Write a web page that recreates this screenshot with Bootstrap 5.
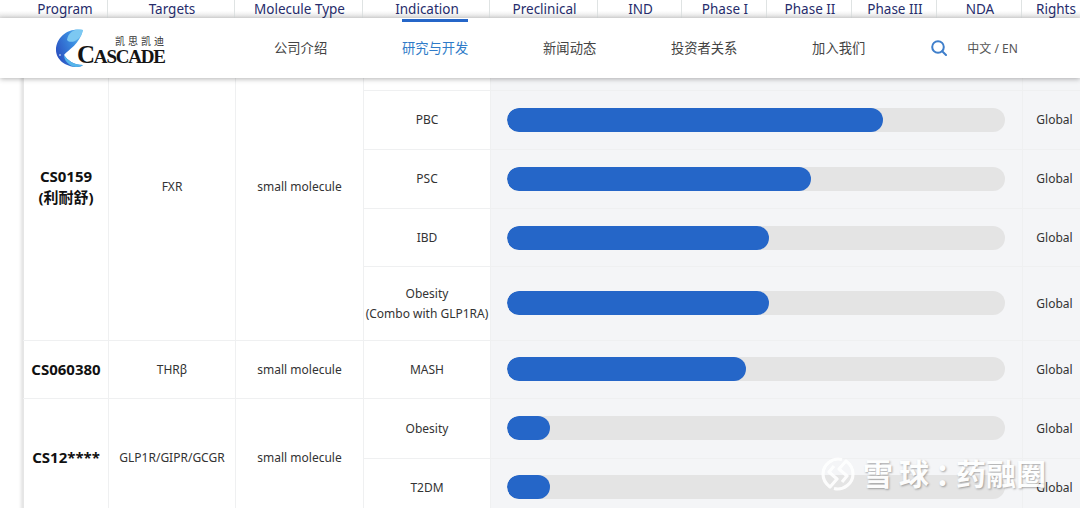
<!DOCTYPE html>
<html lang="en">
  <head>
    <meta charset="UTF-8" />
    <title>Cascade pipeline</title>
    <link href="https://cdn.jsdelivr.net/npm/bootstrap@5.3.0/dist/css/bootstrap.min.css" rel="stylesheet" />
    <style>
      body {
        width: 1080px;
        height: 508px;
        overflow: hidden;
        background: #fff;
        font-family: "Noto Sans", "Noto Sans CJK SC", sans-serif;
      }
      .strip {
        height: 18px;
        width: 1088px;
        display: grid;
        grid-template-columns: 108px 127px 128px 127px 108px 84px 85px 85px 85px 85px 66px;
        background: linear-gradient(#fff 60%, #e4e4e4);
        color: #262c6b;
        font-size: 13.5px;
        line-height: 18px;
        text-align: center;
      }
      .strip > div { border-right: 1px solid #dfe3e3; overflow: hidden; white-space: nowrap; padding-left: 2px; }
      .strip > div:last-child { border-right: 0; }
      .strip .first-col { padding-left: 23px; }
      .topnav {
        height: 60px;
        background: #fff;
        box-shadow: 0 1px 5px rgba(0, 0, 0, 0.3);
        position: relative;
        z-index: 2;
        padding-left: 56px;
        font-size: 13.3px;
        color: #444;
      }
      .brand { width: 110px; height: 40px; position: relative; flex: none; }
      .brand svg { position: absolute; left: 0; top: 0; }
      .brand-cn {
        position: absolute;
        left: 59px;
        top: 7px;
        font-size: 10px;
        letter-spacing: 3px;
        color: #333;
        line-height: 12px;
        white-space: nowrap;
      }
      .brand-en {
        position: absolute;
        left: 21px;
        top: 15px;
        font-family: "Liberation Serif", serif;
        font-weight: 700;
        font-size: 19px;
        line-height: 24px;
        color: #141414;
        letter-spacing: -1.2px;
        white-space: nowrap;
      }
      .brand-en b { font-size: 25px; }
      .menu { margin-left: 108px; gap: 74.7px; }
      .menu a { color: #444; text-decoration: none; position: relative; line-height: 20px; }
      .menu a.on { color: #2f7bc8; }
      .menu a.on::before {
        content: "";
        position: absolute;
        left: 0;
        right: 0;
        top: -19px;
        height: 2.5px;
        background: #2566c8;
      }
      .search { margin-left: 66px; flex: none; }
      .lang { margin-left: 20px; line-height: 19px; font-size: 12px; color: #555; }
      .pipe {
        margin: -46px 0 0 23px;
        border-left: 1px solid #e6e6e6;
        box-shadow: -3px 0 3px -1px rgba(0, 0, 0, 0.12);
        width: 1063px;
        table-layout: fixed;
        border-collapse: collapse;
        font-size: 12px;
        color: #333;
      }
      .pipe td {
        border: 1px solid #eff0f1;
        padding: 0;
        text-align: center;
        vertical-align: middle;
        line-height: 20px;
      }
      .pipe td:first-child { border-left: 0; }
      .pipe .col-a { width: 85px; }
      .pipe .col-b { width: 127px; }
      .pipe .col-c { width: 128px; }
      .pipe .col-d { width: 127px; }
      .pipe .col-e { width: 532px; }
      .pipe .col-f { width: 64px; }
      .pipe tr.h58 { height: 58px; }
      .pipe tr.h59 { height: 59px; }
      .pipe tr.h60 { height: 60px; }
      .pipe tr.h74 { height: 74px; }
      .pipe .code { font-weight: 700; font-size: 15px; color: #111; line-height: 21px; }
      .pipe .shade { background: #f4f5f7; }
      .pipe .ctr { padding: 0 17px 0 16px; }
      .pipe .ctr.lift { padding-bottom: 2px; }
      .track { height: 24px; border-radius: 12px; background: #e4e4e4; overflow: hidden; }
      .fill { height: 100%; border-radius: 12px; background: #2566c8; }
      .mark-wm {
        position: absolute;
        left: 820px;
        top: 456px;
        color: #fff;
        font-weight: 700;
        font-size: 30px;
        line-height: 36px;
        white-space: nowrap;
        opacity: 0.9;
        text-shadow: 1px 1px 2px rgba(0, 0, 0, 0.35);
        gap: 7px;
        z-index: 3;
      }
      .wm-a { letter-spacing: 6px; }
      .wm-colon { letter-spacing: -9px; }
    </style>
  </head>
  <body class="position-relative">
    <div class="strip">
      <div class="first-col">Program</div>
      <div>Targets</div>
      <div>Molecule Type</div>
      <div>Indication</div>
      <div>Preclinical</div>
      <div>IND</div>
      <div>Phase I</div>
      <div>Phase II</div>
      <div>Phase III</div>
      <div>NDA</div>
      <div>Rights</div>
    </div>
    <div class="topnav d-flex align-items-center">
      <div class="brand">
        <svg width="40" height="40" viewBox="0 0 40 40">
          <defs>
            <linearGradient id="fishfill" x1="0" y1="0.7" x2="1" y2="0.1">
              <stop offset="0" stop-color="#2a4fc0" />
              <stop offset="0.6" stop-color="#3a8be0" />
              <stop offset="1" stop-color="#6cc4f2" />
            </linearGradient>
          </defs>
          <path d="M27 2 C14 -1 0 8 0 22 C0 31 9 39 21 39 C24 39 26 38 27 37 C18 37 11 32 8 27 C12 22 24 16 27 2 Z" fill="url(#fishfill)" />
          <path d="M27 2 C18 0 12 5 11 12 C14 16 24 14 27 2 Z" fill="#7cc8f2" />
          <path d="M8 27 C11 32 18 37 27 37 C24 39 18 40 14 37 C10 34 8 31 8 27 Z" fill="#55b5ea" />
          <circle cx="4" cy="27" r="0.8" fill="#fff" />
        </svg>
        <div class="brand-cn">凯思凯迪</div>
        <div class="brand-en"><b>C</b>ASCADE</div>
      </div>
      <div class="menu d-flex align-items-center">
        <a>公司介绍</a>
        <a class="on">研究与开发</a>
        <a>新闻动态</a>
        <a>投资者关系</a>
        <a>加入我们</a>
      </div>
      <svg class="search" width="16" height="16" viewBox="0 0 16 16" fill="none" stroke="#3f7fcb" stroke-width="2">
        <circle cx="7" cy="7" r="5.8" />
        <path d="M11.2 11.2 L15 15" stroke-linecap="round" />
      </svg>
      <div class="lang">中文 / EN</div>
    </div>
    <table class="pipe">
      <colgroup>
        <col class="col-a" /><col class="col-b" /><col class="col-c" /><col class="col-d" /><col class="col-e" /><col class="col-f" />
      </colgroup>
      <tbody>
        <tr class="h58"><td rowspan="5" class="code">CS0159<br />(利耐舒)</td><td rowspan="5">FXR</td><td rowspan="5">small molecule</td><td></td><td class="shade"></td><td class="shade"></td></tr>
        <tr class="h59"><td>PBC</td><td class="shade ctr"><div class="track"><div class="fill" style="width: 75.5%"></div></div></td><td class="shade">Global</td></tr>
        <tr class="h59"><td>PSC</td><td class="shade ctr"><div class="track"><div class="fill" style="width: 61%"></div></div></td><td class="shade">Global</td></tr>
        <tr class="h58"><td>IBD</td><td class="shade ctr"><div class="track"><div class="fill" style="width: 52.6%"></div></div></td><td class="shade">Global</td></tr>
        <tr class="h74"><td>Obesity<br />(Combo with GLP1RA)</td><td class="shade ctr lift"><div class="track"><div class="fill" style="width: 52.6%"></div></div></td><td class="shade">Global</td></tr>
        <tr class="h58"><td class="code">CS060380</td><td>THRβ</td><td>small molecule</td><td>MASH</td><td class="shade ctr lift"><div class="track"><div class="fill" style="width: 48%"></div></div></td><td class="shade">Global</td></tr>
        <tr class="h60"><td rowspan="2" class="code">CS12****</td><td rowspan="2">GLP1R/GIPR/GCGR</td><td rowspan="2">small molecule</td><td>Obesity</td><td class="shade ctr lift"><div class="track"><div class="fill" style="width: 8.6%"></div></div></td><td class="shade">Global</td></tr>
        <tr class="h58"><td>T2DM</td><td class="shade ctr lift"><div class="track"><div class="fill" style="width: 8.6%"></div></div></td><td class="shade">Global</td></tr>
      </tbody>
    </table>
    <div class="mark-wm d-flex align-items-center">
      <svg width="36" height="36" viewBox="0 0 36 36" fill="none" stroke="#fff" stroke-width="3.2" stroke-linejoin="round">
        <path d="M22 3.5 C12 1 3 9 3 18 C3 24 6 28 10 31 L17 23 L9 16 L14 10" />
        <path d="M14 32.5 C24 35 33 27 33 18 C33 12 30 8 26 5 L19 13 L27 20 L22 26" />
      </svg>
      <span><span class="wm-a">雪球</span><span class="wm-colon">：</span>药融圈</span>
    </div>
    <script src="https://cdn.jsdelivr.net/npm/bootstrap@5.3.0/dist/js/bootstrap.bundle.min.js"></script>
  </body>
</html>
